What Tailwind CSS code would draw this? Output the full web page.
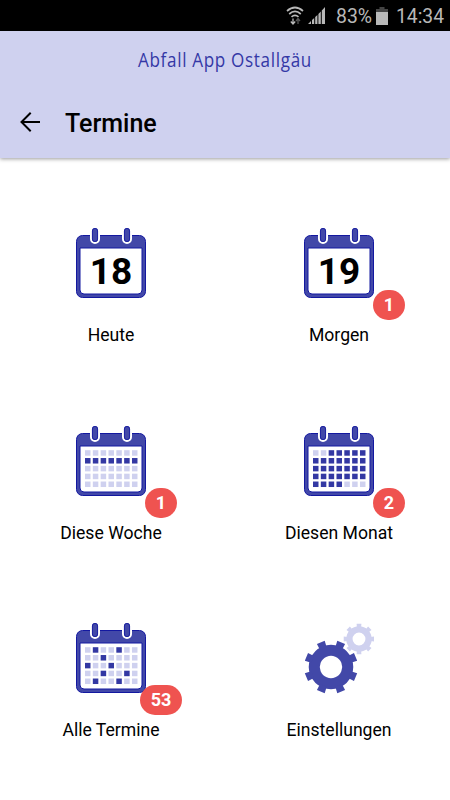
<!DOCTYPE html>
<html lang="de">

<head>
    <meta charset="UTF-8" />
    <meta name="viewport" content="width=device-width, initial-scale=1.0" />
    <title>Abfall App Ostallgäu - Termine</title>
    <script src="https://cdn.jsdelivr.net/npm/@tailwindcss/browser@4"></script>
</head>

<body class="w-[450px] h-[800px] overflow-hidden bg-white text-black font-['Roboto',sans-serif]">
    <!-- Shared icon shapes -->
    <svg class="hidden">
        <symbol id="calendar" viewBox="0 0 70 71">
            <rect x="0.5" y="7.5" width="69" height="62" rx="6" fill="#4248a8" stroke="#1318a0" />
            <path d="M4 20H66V62Q66 66 62 66H8Q4 66 4 62Z" fill="#fff" stroke="#1318a0" />
            <g fill="#4248a8" stroke="#fff" stroke-width="4" paint-order="stroke">
                <rect x="16" y="0" width="6" height="14" rx="3" />
                <rect x="48" y="0" width="6" height="14" rx="3" />
            </g>
            <g fill="#4248a8" stroke="#1318a0" stroke-width="0.8">
                <rect x="16.4" y="0.4" width="5.2" height="13.2" rx="2.6" />
                <rect x="48.4" y="0.4" width="5.2" height="13.2" rx="2.6" />
            </g>
        </symbol>
        <symbol id="gear" viewBox="-27 -27 54 54" overflow="visible">
            <circle r="16.7" fill="none" stroke="currentColor" stroke-width="11" />
            <g fill="currentColor">
                <path id="teeth" d="M-3.6 -20L-4.2 -26.6H4.2L3.6 -20ZM-3.6 20L-4.2 26.6H4.2L3.6 20ZM-20 -3.6L-26.6 -4.2V4.2L-20 3.6ZM20 -3.6L26.6 -4.2V4.2L20 3.6Z" />
                <use href="#teeth" transform="rotate(45)" />
            </g>
        </symbol>
    </svg>

    <!-- Status bar -->
    <div class="h-[31px] bg-black flex items-center justify-end text-[#b8b8b8]">
        <svg class="w-[18px] h-[20px] mr-[4px]" viewBox="0 0 18 20" fill="none" stroke="#b8b8b8" stroke-width="1.7">
            <path d="M1 5Q9 -2 17 5M3.2 8Q9 2.8 14.8 8M5.5 10.8Q9 7.8 12.5 10.8" />
            <path d="M7 12.5V17.5M4.8 15.5L7 18L9.2 15.5" stroke-width="1.3" />
            <path d="M12 18V13M10 15L12 12.6L14 15" stroke="#555" stroke-width="1.3" />
        </svg>
        <svg class="w-[17px] h-[17px] mr-[11px]" viewBox="0 0 17 17" fill="#b8b8b8">
            <path d="M0 17L3 14V17ZM4 17V13L6.2 11V17ZM7.2 17V10L9.4 8V17ZM10.4 17V7L12.8 4.5V17ZM13.8 17V3.5L17 0V17Z" />
        </svg>
        <svg class="w-[40px] h-[31px]" viewBox="0 0 40 31"><text x="0" y="23" font-size="20" fill="#b8b8b8" textLength="36" lengthAdjust="spacingAndGlyphs">83%</text></svg>
        <svg class="w-[12px] h-[18px] mr-[8px]" viewBox="0 0 12 18">
            <path d="M3.5 0H8.5V2H12V6H0V2H3.5Z" fill="#444" />
            <rect y="5" width="12" height="13" fill="#b8b8b8" />
        </svg>
        <svg class="w-[54px] h-[31px]" viewBox="0 0 54 31"><text x="0" y="23" font-size="20" fill="#b8b8b8" textLength="48" lengthAdjust="spacingAndGlyphs">14:34</text></svg>
    </div>

    <!-- App bar -->
    <header class="h-[127px] bg-[#cfd1ef] shadow-[0_1px_4px_rgba(0,0,0,0.4)]">
        <svg class="block w-full h-[56px]" viewBox="0 0 450 56">
            <text x="138" y="36" font-size="20.5" letter-spacing="0.8" fill="#3438a6" font-family="Open Sans" textLength="174" lengthAdjust="spacingAndGlyphs">Abfall App Ostallgäu</text>
        </svg>
        <div class="flex items-center h-[70px] pl-5">
            <svg class="w-5 h-[20px]" viewBox="0 0 20 20" fill="none" stroke="#000" stroke-width="2">
                <path d="M20 10H1.5M10.7 0.8L1.5 10L10.7 19.2" />
            </svg>
            <h1 class="ml-[25px] text-[25px] leading-[30px] mt-1 font-medium">Termine</h1>
        </div>
    </header>

    <!-- Tiles -->
    <main class="grid grid-cols-2 auto-rows-[197.5px] -mx-[3px] pt-[70px] text-center text-[17.6px] leading-6">
        <div>
            <div class="relative w-[70px] h-[71px] mx-auto">
                <svg class="w-full h-full"><use href="#calendar" /></svg>
                <span class="absolute inset-x-0 top-[24px] text-[37px] leading-10 font-bold">18</span>
            </div>
            <p class="mt-[24px]">Heute</p>
        </div>
        <div>
            <div class="relative w-[70px] h-[71px] mx-auto">
                <svg class="w-full h-full"><use href="#calendar" /></svg>
                <span class="absolute inset-x-0 top-[24px] text-[37px] leading-10 font-bold">19</span>
                <span class="absolute left-[69px] top-[62px] w-[32px] h-[30px] rounded-full bg-[#ef5350] text-white text-[18px] font-bold leading-[30px]">1</span>
            </div>
            <p class="mt-[24px]">Morgen</p>
        </div>
        <div>
            <div class="relative w-[70px] h-[71px] mx-auto">
                <svg class="w-full h-full"><use href="#calendar" /><g data-days=".......|#######|.......|.......|......."></g></svg>
                <span class="absolute left-[69px] top-[62px] w-[32px] h-[30px] rounded-full bg-[#ef5350] text-white text-[18px] font-bold leading-[30px]">1</span>
            </div>
            <p class="mt-[24px]">Diese Woche</p>
        </div>
        <div>
            <div class="relative w-[70px] h-[71px] mx-auto">
                <svg class="w-full h-full"><use href="#calendar" /><g data-days="..#####|#######|#######|#######|####..."></g></svg>
                <span class="absolute left-[69px] top-[62px] w-[32px] h-[30px] rounded-full bg-[#ef5350] text-white text-[18px] font-bold leading-[30px]">2</span>
            </div>
            <p class="mt-[24px]">Diesen Monat</p>
        </div>
        <div>
            <div class="relative w-[70px] h-[71px] mx-auto">
                <svg class="w-full h-full"><use href="#calendar" /><g data-days=".#..#..|..#....|#..#...|..#..#.|.#..#.."></g></svg>
                <span class="absolute left-[64px] top-[62px] w-[42px] h-[30px] rounded-full bg-[#ef5350] text-white text-[18px] font-bold leading-[30px]">53</span>
            </div>
            <p class="mt-[24px]">Alle Termine</p>
        </div>
        <div>
            <svg class="w-[70px] h-[71px] mx-auto" viewBox="0 0 70 71">
                <use href="#gear" x="39.5" y="0.5" width="31" height="31" class="text-[#cfd1ef]" />
                <g transform="rotate(22.5 27 44)"><use href="#gear" x="0" y="17" width="54" height="54" class="text-[#4248a8]" /></g>
            </svg>
            <p class="mt-[24px]">Einstellungen</p>
        </div>
    </main>

    <script>
        // Fill the calendar sheets, '#' marks a highlighted day
        document.querySelectorAll('[data-days]').forEach(sheet => {
            sheet.dataset.days.split('|').forEach((week, row) => {
                [...week].forEach((day, col) => {
                    const cell = document.createElementNS('http://www.w3.org/2000/svg', 'rect');
                    cell.setAttribute('x', 9 + col * 7.83);
                    cell.setAttribute('y', 24.2 + row * 7.83);
                    cell.setAttribute('width', 5.5);
                    cell.setAttribute('height', 5.5);
                    cell.setAttribute('fill', day === '#' ? '#3338a3' : '#cfd1ef');
                    sheet.appendChild(cell);
                });
            });
        });
    </script>
</body>

</html>
